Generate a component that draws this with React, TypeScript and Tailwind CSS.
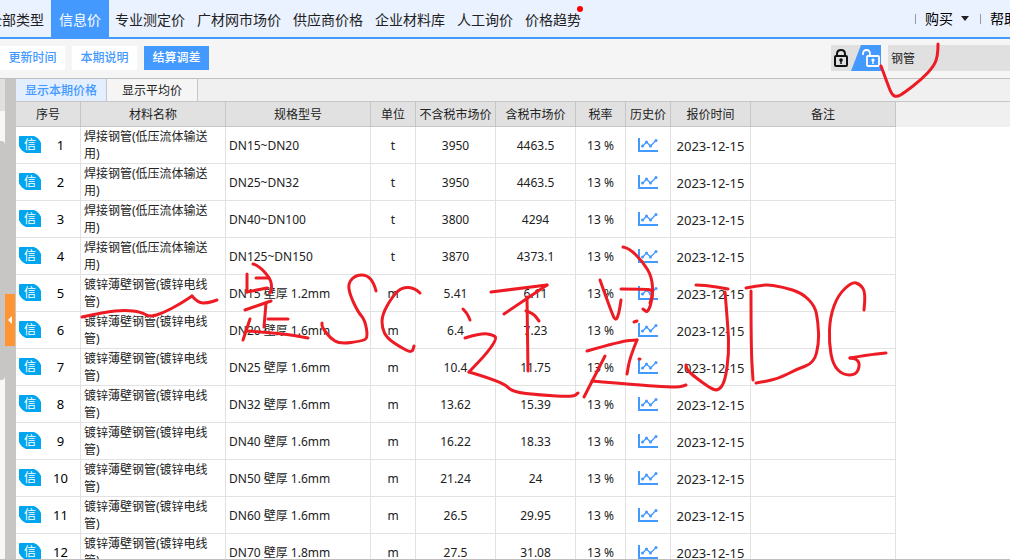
import clsx from "clsx";

type Point = [number, number];

const navItems = [
  "专业测定价",
  "广材网市场价",
  "供应商价格",
  "企业材料库",
  "人工询价",
  "价格趋势"
];

const columns = [
  { label: "序号", width: "w-[65px]" },
  { label: "材料名称", width: "w-[145px]" },
  { label: "规格型号", width: "w-[145px]" },
  { label: "单位", width: "w-[45px]" },
  { label: "不含税市场价", width: "w-[80px]" },
  { label: "含税市场价", width: "w-[80px]" },
  { label: "税率", width: "w-[50px]" },
  { label: "历史价", width: "w-[45px]" },
  { label: "报价时间", width: "w-[80px]" },
  { label: "备注", width: "w-[145px]" }
];

const WELDED = "焊接钢管(低压流体输送用)";
const CONDUIT = "镀锌薄壁钢管(镀锌电线管)";

const rows = [
  { name: WELDED, spec: "DN15~DN20", unit: "t", net: "3950", gross: "4463.5" },
  { name: WELDED, spec: "DN25~DN32", unit: "t", net: "3950", gross: "4463.5" },
  { name: WELDED, spec: "DN40~DN100", unit: "t", net: "3800", gross: "4294" },
  { name: WELDED, spec: "DN125~DN150", unit: "t", net: "3870", gross: "4373.1" },
  { name: CONDUIT, spec: "DN15 壁厚 1.2mm", unit: "m", net: "5.41", gross: "6.11" },
  { name: CONDUIT, spec: "DN20 壁厚 1.6mm", unit: "m", net: "6.4", gross: "7.23" },
  { name: CONDUIT, spec: "DN25 壁厚 1.6mm", unit: "m", net: "10.4", gross: "11.75" },
  { name: CONDUIT, spec: "DN32 壁厚 1.6mm", unit: "m", net: "13.62", gross: "15.39" },
  { name: CONDUIT, spec: "DN40 壁厚 1.6mm", unit: "m", net: "16.22", gross: "18.33" },
  { name: CONDUIT, spec: "DN50 壁厚 1.6mm", unit: "m", net: "21.24", gross: "24" },
  { name: CONDUIT, spec: "DN60 壁厚 1.6mm", unit: "m", net: "26.5", gross: "29.95" },
  { name: CONDUIT, spec: "DN70 壁厚 1.8mm", unit: "m", net: "27.5", gross: "31.08" }
];

// Pen strokes, one list of points per stroke
const strokes: Point[][] = [
  // tick under the search box
  [[938, 44], [938, 55], [934, 66], [922, 79], [904, 93], [897, 97], [892, 95], [888, 85], [884, 74], [881, 66]],
  // underline
  [[82, 317], [105, 312], [125, 310], [141, 312], [150, 317], [163, 313], [180, 304], [192, 296]],
  [[192, 296], [198, 303], [208, 303], [217, 300]],
  // first character
  [[253, 264], [258, 265], [270, 278], [272, 287], [270, 293]],
  [[247, 274], [247, 292]],
  [[247, 292], [267, 288]],
  [[256, 278], [269, 278]],
  [[245, 310], [271, 301]],
  [[266, 303], [264, 327]],
  [[268, 319], [288, 319]],
  [[250, 319], [243, 340]],
  [[247, 331], [280, 333], [308, 338]],
  // S
  [[376, 291], [374, 283], [367, 275], [356, 275], [348, 283], [350, 295], [358, 312], [365, 320], [368, 338], [362, 341], [340, 344], [330, 338], [322, 327], [322, 323]],
  // C
  [[420, 293], [415, 288], [402, 287], [392, 297], [382, 315], [382, 328], [387, 338], [400, 347], [412, 353], [414, 346]],
  // second character
  [[463, 309], [467, 313], [470, 320]],
  [[465, 338], [482, 333], [493, 335], [497, 338], [488, 352], [469, 372]],
  [[469, 372], [503, 382], [512, 392], [540, 395], [573, 397], [578, 393]],
  [[491, 292], [547, 285]],
  [[547, 285], [504, 314]],
  [[527, 297], [528, 371]],
  [[526, 311], [533, 313], [539, 321]],
  // third character with its bracket
  [[600, 280], [612, 314], [616, 321], [619, 313], [621, 300]],
  [[623, 247], [629, 248], [643, 262], [652, 277], [653, 297], [648, 313], [643, 309]],
  [[621, 289], [643, 289], [654, 290], [650, 303]],
  [[634, 322], [637, 321]],
  [[639, 359], [640, 359]],
  [[587, 351], [622, 341], [637, 340]],
  [[637, 340], [630, 357], [627, 374]],
  [[605, 356], [584, 397]],
  [[592, 381], [637, 385], [670, 387], [680, 387], [686, 385]],
  // J
  [[696, 285], [705, 285], [728, 289]],
  [[725, 292], [728, 327], [729, 353], [725, 382], [718, 391], [710, 388], [695, 377], [687, 370], [686, 365]],
  // D
  [[751, 291], [751, 348], [753, 380]],
  [[746, 288], [763, 284], [783, 287], [802, 293], [815, 306], [818, 322], [819, 343], [814, 363], [797, 369], [778, 379], [756, 383]],
  // G
  [[864, 310], [866, 293], [860, 284], [852, 282], [838, 295], [830, 317], [829, 343], [833, 365], [843, 375], [856, 375], [860, 365], [857, 359], [850, 358]],
  [[850, 358], [867, 355], [886, 353]]
];

// Curves through the midpoints so that the strokes look drawn by hand
function toPath(points: Point[]) {
  const [first, ...rest] = points;
  const last = rest[rest.length - 1];
  let d = `M${first[0]} ${first[1]}`;
  for (let i = 0; i < rest.length - 1; i++) {
    const [x, y] = rest[i];
    const [nx, ny] = rest[i + 1];
    d += ` Q${x} ${y} ${(x + nx) / 2} ${(y + ny) / 2}`;
  }
  return `${d} L${last[0]} ${last[1]}`;
}

const InfoBadge = () => (
  <span className="relative flex h-[17px] w-[22px] shrink-0 items-center justify-center">
    <svg viewBox="0 0 22 17" className="absolute inset-0 h-full w-full">
      <path
        d="M1 0H15Q20 2 22 7V17H7Q2 15 0 10V1Q0 0 1 0Z"
        fill="#00a5ef"
      />
    </svg>
    <span className="relative text-xs leading-[17px] text-white">信</span>
  </span>
);

const TrendIcon = () => (
  <svg viewBox="0 0 20 15" className="h-[15px] w-5" fill="none">
    <path d="M1 0V13H20" stroke="#4499ff" strokeWidth="2" />
    <path d="M4.5 8.5L8.5 4L12.5 8L18 2.5" stroke="#4499ff" strokeWidth="1.3" />
    <g fill="#4499ff">
      <circle cx="4.5" cy="8" r="1.5" />
      <circle cx="8.5" cy="4" r="1.5" />
      <circle cx="12.5" cy="8" r="1.5" />
      <circle cx="18" cy="2.5" r="1.5" />
    </g>
  </svg>
);

const LockSwitch = () => (
  <button type="button" aria-label="锁定" className="h-[26px] w-[50px] shrink-0">
    <svg viewBox="0 0 50 26" className="h-full w-full" fill="none">
      <rect width="50" height="26" fill="#e0e0e0" />
      <path d="M30 0H50V26H20Z" fill="#4499ff" />
      <rect x="4" y="11" width="12" height="10" rx="1" stroke="#111" strokeWidth="2" />
      <path d="M6 11V9Q6 5 10 5T14 9V11" stroke="#111" strokeWidth="2" />
      <circle cx="10" cy="15" r="1.8" fill="#111" />
      <path d="M10 15V19" stroke="#111" strokeWidth="1.5" />
      <rect x="36" y="11" width="12" height="10" rx="1" stroke="#fff" strokeWidth="1.8" />
      <path d="M32 10V9Q32 5 35.5 5T39 9V11" stroke="#fff" strokeWidth="1.8" />
      <circle cx="42" cy="15" r="1.6" fill="#fff" />
      <path d="M42 15V19" stroke="#fff" strokeWidth="1.4" />
    </svg>
  </button>
);

const Header = () => (
  <header className="flex h-[39px] shrink-0 items-stretch border-b-2 border-[#4499ff] bg-[#eaf1ff] text-sm text-[#222]">
    <nav className="flex shrink-0 items-stretch whitespace-nowrap">
      <a href="#all" className="flex w-[51px] items-center justify-end overflow-hidden pt-0.5 pr-[7px]">
        全部类型
      </a>
      <a href="#info" className="flex items-center bg-[#4499ff] px-2 pt-0.5 text-white">
        信息价
      </a>
      {navItems.map((item) => (
        <a key={item} href="#nav" className="flex items-center px-[6px] pt-0.5">
          <span className="relative">
            {item}
            {item === "价格趋势" && (
              <span className="absolute -top-1 -right-0.5 h-1.5 w-1.5 rounded-full bg-[#ff0000]" />
            )}
          </span>
        </a>
      ))}
    </nav>
    <div className="ml-auto flex shrink-0 items-center whitespace-nowrap text-black">
      <span className="h-[10px] w-px bg-[#999]" />
      <button type="button" className="flex items-center gap-2 pr-[11px] pl-[9px]">
        购买
        <svg viewBox="0 0 8 5" className="h-[5px] w-2">
          <path d="M0 0H8L4 5Z" fill="#222" />
        </svg>
      </button>
      <span className="h-[10px] w-px bg-[#999]" />
      <a href="#help" className="w-[29px] overflow-hidden pl-[9px]">
        帮助
      </a>
    </div>
  </header>
);

const Toolbar = () => (
  <div className="flex h-10 shrink-0 items-center border-b border-[#bfbfbf] bg-[#f5f5f5] pb-px text-xs">
    <div className="flex gap-[7px]">
      {["更新时间", "本期说明", "结算调差"].map((label) => (
        <button
          key={label}
          type="button"
          className={clsx(
            "h-6 w-[65px] font-medium",
            label === "结算调差" ? "bg-[#4499ff] text-white" : "bg-white text-[#4499ff]"
          )}
        >
          {label}
        </button>
      ))}
    </div>
    <div className="ml-auto flex items-center gap-[7px]">
      <LockSwitch />
      <input
        type="text"
        aria-label="搜索"
        defaultValue="钢管"
        className="h-[26px] w-[122px] bg-[#e0e0e0] px-[3px] text-[#222] outline-none"
      />
    </div>
  </div>
);

const SideRail = () => (
  <aside className="flex shrink-0">
    <div className="flex w-[5px] flex-col bg-[#f7f7f7]">
      <div className="h-8 bg-[#e0e0e0]" />
      <div className="mt-[30px] h-[239px] rounded-r bg-[#c8c6c5]" />
    </div>
    <div className="w-[11px] bg-[#c8c6c5] pt-[215px]">
      <button
        type="button"
        aria-label="收起"
        className="flex h-[52px] w-[10px] items-center justify-center bg-[#ff9433]"
      >
        <svg viewBox="0 0 4 8" className="h-2 w-1">
          <path d="M4 0V8L0 4Z" fill="#fff" />
        </svg>
      </button>
    </div>
  </aside>
);

const PriceTable = () => (
  <table className="w-[880px] table-fixed border-separate border-spacing-0 text-center text-[#222]">
    <thead>
      <tr className="h-[25px] bg-[#e1e1e1]">
        {columns.map((column) => (
          <th
            key={column.label}
            className={clsx(
              "border-r border-b border-[#c6c6c6] p-0 pt-0.5 font-normal whitespace-nowrap",
              column.width
            )}
          >
            {column.label}
          </th>
        ))}
      </tr>
    </thead>
    <tbody className="[&_td]:border-r [&_td]:border-b [&_td]:border-[#e2e2e2] [&_td]:p-0">
      {rows.map((row, index) => (
        <tr key={row.spec} className="h-[37px]">
          <td>
            <div className="flex items-center pb-px pl-[3px] text-black">
              <InfoBadge />
              <span className="flex-1 text-[13px] leading-4">{index + 1}</span>
            </div>
          </td>
          <td>
            <div className="pr-4 pl-[3px] text-left leading-[17px]">{row.name}</div>
          </td>
          <td>
            <div className="pt-0.5 pl-[3px] text-left">{row.spec}</div>
          </td>
          <td>
            <div className="pt-0.5">{row.unit}</div>
          </td>
          <td>
            <div className="pt-0.5">{row.net}</div>
          </td>
          <td>
            <div className="pt-0.5">{row.gross}</div>
          </td>
          <td>
            <div className="pt-0.5">13 %</div>
          </td>
          <td>
            <div className="flex justify-center">
              <TrendIcon />
            </div>
          </td>
          <td>
            <div className="pt-0.5 text-[13px] leading-4">2023-12-15</div>
          </td>
          <td />
        </tr>
      ))}
    </tbody>
  </table>
);

export default function App() {
  return (
    <div className="relative flex h-screen flex-col overflow-hidden bg-white font-['Noto_Sans','Noto_Sans_CJK_SC',sans-serif]">
      <Header />
      <Toolbar />
      <div className="flex min-h-0 flex-1 border-b border-[#bfbfbf] text-xs">
        <SideRail />
        <main className="min-w-0 flex-1 overflow-hidden">
          <div className="flex h-[23px] border-b border-[#c6c6c6] bg-[#f0f0f0]">
            <button
              type="button"
              className="w-[91px] border-r border-[#c6c6c6] bg-[#e3efff] pt-0.5 font-medium text-[#4499ff]"
            >
              显示本期价格
            </button>
            <button
              type="button"
              className="w-[91px] border-r border-[#c6c6c6] bg-[#f5f5f5] pt-0.5 text-[#222]"
            >
              显示平均价
            </button>
          </div>
          <div className="flex items-start">
            <PriceTable />
            <div className="h-[25px] flex-1 bg-[#f0f0f0]" />
          </div>
        </main>
      </div>

      {/* Handwritten notes */}
      <svg
        viewBox="0 0 1010 560"
        className="pointer-events-none absolute top-0 left-0 h-[560px] w-[1010px]"
        fill="none"
        stroke="#ed1c24"
        strokeWidth="3"
        strokeLinecap="round"
        strokeLinejoin="round"
      >
        {strokes.map((points, index) => (
          <path key={index} d={toPath(points)} />
        ))}
      </svg>
    </div>
  );
}
